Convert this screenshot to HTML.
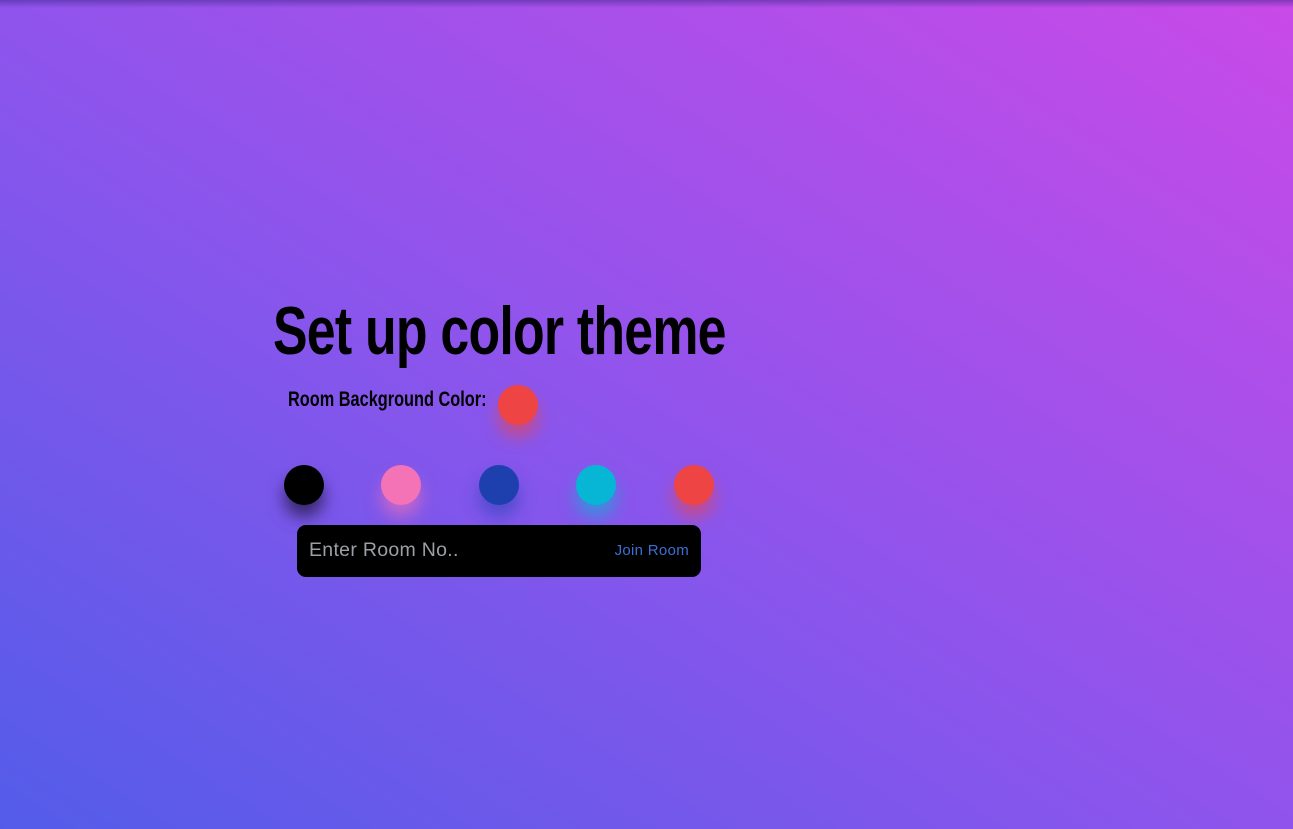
<!DOCTYPE html>
<html><head><style>
html,body{margin:0;padding:0;width:1293px;height:829px;overflow:hidden}
body{background:linear-gradient(to top right,#535ce9 0%,#8a55ec 45%,#c94ae8 100%);position:relative;font-family:"Liberation Sans",sans-serif}
.top{position:absolute;left:0;top:0;width:100%;height:8px;background:linear-gradient(rgba(60,40,140,.5),rgba(60,40,140,0))}
h1{position:absolute;left:273px;top:292px;margin:0;font-family:"Liberation Sans Narrow","Liberation Sans",sans-serif;font-weight:bold;font-size:68px;line-height:78px;color:#000;transform:scaleX(.762);transform-origin:left;white-space:nowrap;letter-spacing:-1px}
.lbl{position:absolute;left:288px;top:387px;font-family:"Liberation Sans Narrow","Liberation Sans",sans-serif;font-weight:bold;font-size:21px;line-height:26px;transform:scaleX(.777);transform-origin:left;white-space:nowrap}
.c{position:absolute;width:40px;height:40px;border-radius:50%}
.box{position:absolute;left:297px;top:525px;width:404px;height:52px;background:#000;border-radius:9px}
.ph{position:absolute;left:12px;top:14px;color:#9aa0a6;font-size:19.5px;letter-spacing:.3px}
.jr{position:absolute;right:12px;top:17px;color:#3b6fd4;font-size:15px;letter-spacing:.3px}
</style></head><body>
<div class="top"></div>
<h1>Set up color theme</h1>
<div class="lbl">Room Background Color:</div>
<div class="c" style="left:498px;top:385px;background:#ef4444;box-shadow:0 12px 16px rgba(239,68,68,.6)"></div>
<div class="c" style="left:284px;top:465px;background:#000;box-shadow:0 12px 16px rgba(0,0,0,.55)"></div>
<div class="c" style="left:381px;top:465px;background:#f472b6;box-shadow:0 12px 16px rgba(244,114,182,.6)"></div>
<div class="c" style="left:479px;top:465px;background:#1e40af;box-shadow:0 12px 16px rgba(30,64,175,.5)"></div>
<div class="c" style="left:576px;top:465px;background:#06b6d4;box-shadow:0 12px 16px rgba(6,182,212,.6)"></div>
<div class="c" style="left:674px;top:465px;background:#ef4444;box-shadow:0 12px 16px rgba(239,68,68,.6)"></div>
<div class="box"><span class="ph">Enter Room No..</span><span class="jr">Join Room</span></div>
</body></html>
